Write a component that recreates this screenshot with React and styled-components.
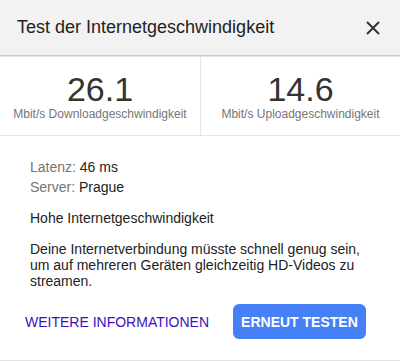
import React from "react";
import styled, { createGlobalStyle } from "styled-components";

const GlobalStyle = createGlobalStyle`
  body {
    margin: 0;
    background: #fff;
    font-family: "Liberation Sans", Arial, sans-serif;
  }
`;

const Dialog = styled.div`
  width: 400px;
  height: 361px;
  box-sizing: border-box;
  border-bottom: 1px solid #e3e3e3;
  background: #fff;
`;

const Header = styled.div`
  height: 55px;
  display: flex;
  align-items: center;
  justify-content: space-between;
  padding: 0 20px 0 17px;
  background: #f2f2f2;
  border-bottom: 1px solid #c9c9c9;
  box-shadow: 0 1px 0 #e4e4e4;
  .title {
    font-size: 18px;
    color: #222;
  }
  .close {
    width: 14px;
    height: 14px;
    display: block;
  }
`;

const Stats = styled.div`
  display: grid;
  grid-template-columns: 1fr 1fr;
  border-bottom: 1px solid #e6e6e6;
`;

const Stat = styled.div`
  padding: 16px 0 14px;
  text-align: center;
  border-left: ${(p) => (p.divided ? "1px solid #e6e6e6" : "none")};
  .value {
    font-size: 34px;
    line-height: 34px;
    color: #333;
  }
  .unit {
    margin-top: 1px;
    font-size: 12px;
    color: #757575;
  }
`;

const Body = styled.div`
  padding: 21px 30px 0;
  color: #222;
  font-size: 14px;
`;

const InfoLine = styled.div`
  line-height: 20px;
  span {
    color: #757575;
  }
`;

const Text = styled.p`
  margin: ${(p) => p.gap}px 0 0;
  line-height: 16px;
`;

const Actions = styled.div`
  display: flex;
  align-items: center;
  gap: 24px;
  padding: 15px 0 0 25px;
`;

const LinkButton = styled.a`
  font-size: 14px;
  color: #3d10bd;
  text-decoration: none;
`;

const PrimaryButton = styled.button`
  height: 35px;
  padding: 0 8px;
  border: none;
  border-radius: 6px;
  background: #4580f6;
  color: #fff;
  font-family: inherit;
  font-size: 14px;
  font-weight: bold;
`;

export default function App() {
  return (
    <>
      <GlobalStyle />
      <Dialog>
        <Header>
          <div className="title">Test der Internetgeschwindigkeit</div>
          <svg className="close" viewBox="0 0 14 14">
            <path d="M1 1 L13 13 M13 1 L1 13" stroke="#333" strokeWidth="2" />
          </svg>
        </Header>
        <Stats>
          <Stat>
            <div className="value">26.1</div>
            <div className="unit">Mbit/s Downloadgeschwindigkeit</div>
          </Stat>
          <Stat divided>
            <div className="value">14.6</div>
            <div className="unit">Mbit/s Uploadgeschwindigkeit</div>
          </Stat>
        </Stats>
        <Body>
          <InfoLine>
            <span>Latenz:</span> 46 ms
          </InfoLine>
          <InfoLine>
            <span>Server:</span> Prague
          </InfoLine>
          <Text gap={13}>Hohe Internetgeschwindigkeit</Text>
          <Text gap={15}>
            Deine Internetverbindung müsste schnell genug sein, um auf mehreren
            Geräten gleichzeitig HD-Videos zu streamen.
          </Text>
        </Body>
        <Actions>
          <LinkButton href="#">WEITERE INFORMATIONEN</LinkButton>
          <PrimaryButton>ERNEUT TESTEN</PrimaryButton>
        </Actions>
      </Dialog>
    </>
  );
}
